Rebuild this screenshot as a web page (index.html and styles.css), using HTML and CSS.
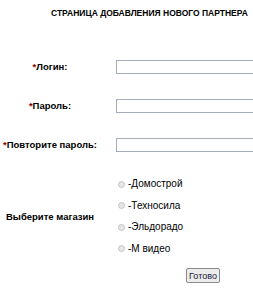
FILE: index.html
```html
<html>
<head>
<title>Добавление партнера</title>
<link rel="stylesheet" href="styles.css">
</head>
<body>
<h1 class="title">СТРАНИЦА ДОБАВЛЕНИЯ НОВОГО ПАРТНЕРА</h1>
<form class="partner">
  <label class="lbl" for="login"><span class="req">*</span>Логин:</label>
  <div class="fld"><input class="txt" id="login" type="text"></div>

  <label class="lbl" for="pass"><span class="req">*</span>Пароль:</label>
  <div class="fld"><input class="txt" id="pass" type="password"></div>

  <label class="lbl" for="pass2"><span class="req">*</span>Повторите пароль:</label>
  <div class="fld"><input class="txt" id="pass2" type="password"></div>

  <div class="lbl shop-lbl">Выберите магазин</div>
  <div class="shops">
    <label class="shop"><input class="rad" type="radio" name="shop">-Домострой</label>
    <label class="shop"><input class="rad" type="radio" name="shop">-Техносила</label>
    <label class="shop"><input class="rad" type="radio" name="shop">-Эльдорадо</label>
    <label class="shop"><input class="rad" type="radio" name="shop">-М видео</label>
  </div>

  <div></div>
  <div class="send"><button class="btn" type="button">Готово</button></div>
</form>
</body>
</html>
```

FILE: styles.css
```css
html, body { overflow:hidden; }
body { margin:0; background:#FFF; color:#000; font-family:"Liberation Sans", Arial, sans-serif; }

.title { margin:0; padding:8px 0 0 51px; font-size:8.5px; line-height:10px; font-weight:bold; white-space:nowrap; }

.partner { display:grid; grid-template-columns:100px 1fr; column-gap:16px; margin-top:29px; }

.lbl { display:flex; align-items:center; justify-content:center; height:39px; font-size:9.5px; font-weight:bold; white-space:nowrap; }
.req { color:#8B0000; }
.fld { display:flex; align-items:center; height:39px; }
.txt { width:150px; height:14px; margin:0; padding:0 2px; border:1px solid #A5ACB5; font-size:10px; box-sizing:border-box; }

.shop-lbl { height:auto; margin-top:9px; }
.shops { display:flex; flex-direction:column; margin-top:9px; }
.shop { display:flex; align-items:center; height:21.5px; font-size:10px; }
.rad { appearance:none; -webkit-appearance:none; width:7px; height:7px; margin:1px 3px 0 2px; border:1px solid #C4C4C4; border-radius:50%; background:#E6E6E6; box-sizing:border-box; }

.send { padding:9px 0 0 70px; }
.btn { width:34px; height:15px; margin:0; padding:0; border:1px solid #8A8A8A; border-radius:2px; background:#ECECEC; color:#1A1A3A; font-family:"Liberation Sans", Arial, sans-serif; font-size:9px; }
```
